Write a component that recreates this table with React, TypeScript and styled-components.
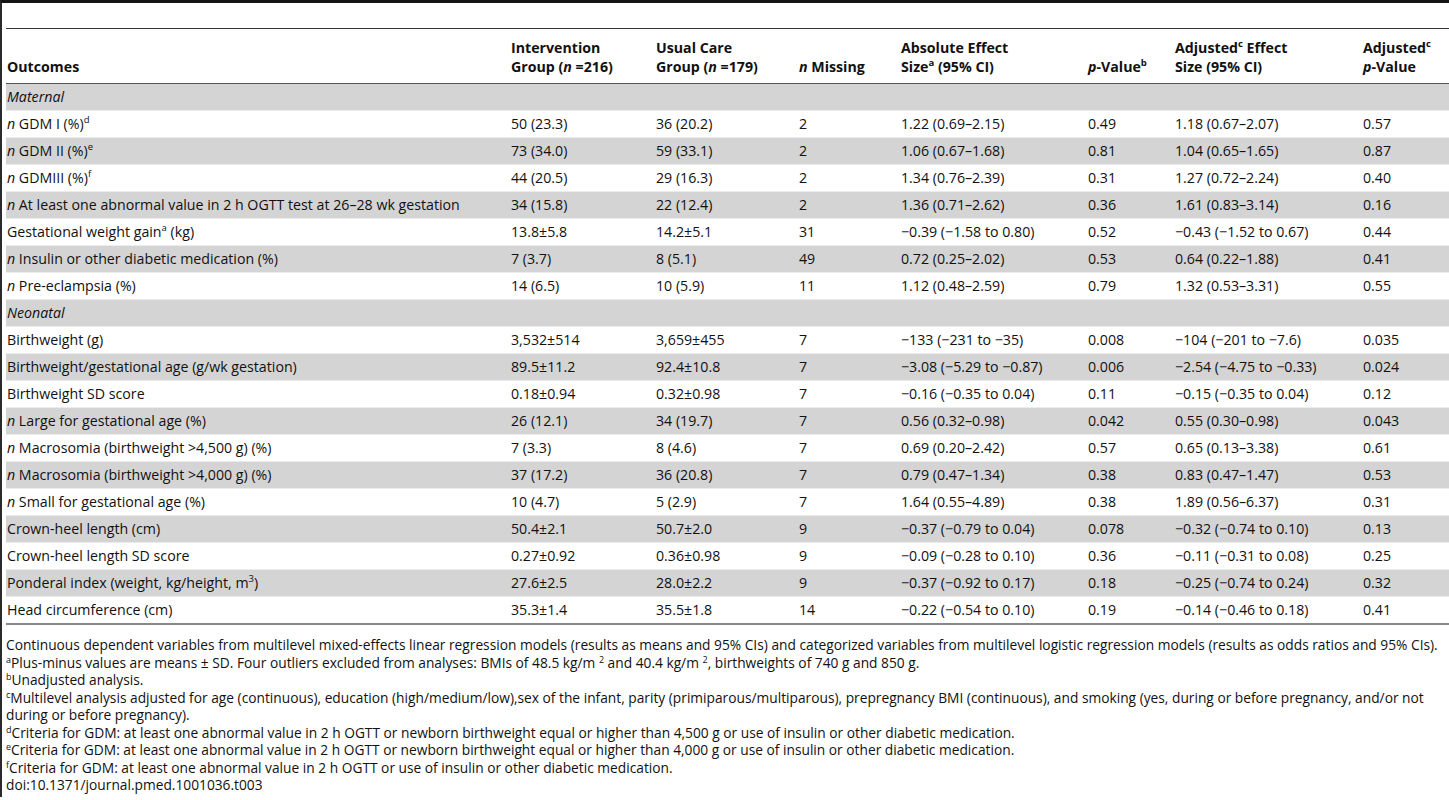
import React from 'react'
import styled, { createGlobalStyle } from 'styled-components'

const Global = createGlobalStyle`
  body {
    margin: 0;
    background: #fff;
    font-family: 'Open Sans', 'Noto Sans', sans-serif;
    color: #111;
  }
`

const Frame = styled.div`
  border-left: 2px solid #2a2a2a;
  border-top: 3px solid #151515;
  min-height: 797px;
  padding-left: 4px;
  box-sizing: border-box;
`

const Caption = styled.div`
  height: 25px;
`

const Table = styled.table`
  width: 100%;
  border-collapse: collapse;
  table-layout: fixed;
  border-top: 1px solid #333;
  border-bottom: 2px solid #888;
  font-size: 14.2px;
`

const Th = styled.th`
  text-align: left;
  vertical-align: bottom;
  font-weight: 700;
  line-height: 19px;
  padding: 9px 0 7px 1px;
  border-bottom: 1px solid #555;
  white-space: nowrap;
`

const Row = styled.tr<{ $shade?: boolean }>`
  background: ${({ $shade }) => ($shade ? '#d4d4d4' : '#fff')};
  border-top: 1px solid #ececec;
`

const Td = styled.td`
  line-height: 26px;
  padding: 0 0 0 1px;
  white-space: nowrap;
  vertical-align: middle;
`

const Section = styled.td`
  line-height: 26px;
  padding: 0 0 0 1px;
  font-style: italic;
`

const Sup = styled.sup`
  font-size: 9.5px;
  line-height: 0;
  vertical-align: 6px;
`

const I = styled.i`
  font-style: italic;
`

const Notes = styled.div`
  padding-top: 11px;
  padding-right: 1px;
  font-size: 13.75px;
  line-height: 17.5px;
`

const Note = styled.div``

const NoteSup = styled.sup`
  font-size: 9px;
  line-height: 0;
  vertical-align: 5px;
`

type Cell = React.ReactNode
type DataRow = { label: Cell; cells: Cell[] } | { section: string }

const n = <I>n</I>
const m = '\u2212'

const rows: DataRow[] = [
  { section: 'Maternal' },
  { label: <>{n} GDM I (%)<Sup>d</Sup></>, cells: ['50 (23.3)', '36 (20.2)', '2', '1.22 (0.69–2.15)', '0.49', '1.18 (0.67–2.07)', '0.57'] },
  { label: <>{n} GDM II (%)<Sup>e</Sup></>, cells: ['73 (34.0)', '59 (33.1)', '2', '1.06 (0.67–1.68)', '0.81', '1.04 (0.65–1.65)', '0.87'] },
  { label: <>{n} GDMIII (%)<Sup>f</Sup></>, cells: ['44 (20.5)', '29 (16.3)', '2', '1.34 (0.76–2.39)', '0.31', '1.27 (0.72–2.24)', '0.40'] },
  { label: <>{n} At least one abnormal value in 2 h OGTT test at 26–28 wk gestation</>, cells: ['34 (15.8)', '22 (12.4)', '2', '1.36 (0.71–2.62)', '0.36', '1.61 (0.83–3.14)', '0.16'] },
  { label: <>Gestational weight gain<Sup>a</Sup> (kg)</>, cells: ['13.8±5.8', '14.2±5.1', '31', `${m}0.39 (${m}1.58 to 0.80)`, '0.52', `${m}0.43 (${m}1.52 to 0.67)`, '0.44'] },
  { label: <>{n} Insulin or other diabetic medication (%)</>, cells: ['7 (3.7)', '8 (5.1)', '49', '0.72 (0.25–2.02)', '0.53', '0.64 (0.22–1.88)', '0.41'] },
  { label: <>{n} Pre-eclampsia (%)</>, cells: ['14 (6.5)', '10 (5.9)', '11', '1.12 (0.48–2.59)', '0.79', '1.32 (0.53–3.31)', '0.55'] },
  { section: 'Neonatal' },
  { label: 'Birthweight (g)', cells: ['3,532±514', '3,659±455', '7', `${m}133 (${m}231 to ${m}35)`, '0.008', `${m}104 (${m}201 to ${m}7.6)`, '0.035'] },
  { label: 'Birthweight/gestational age (g/wk gestation)', cells: ['89.5±11.2', '92.4±10.8', '7', `${m}3.08 (${m}5.29 to ${m}0.87)`, '0.006', `${m}2.54 (${m}4.75 to ${m}0.33)`, '0.024'] },
  { label: 'Birthweight SD score', cells: ['0.18±0.94', '0.32±0.98', '7', `${m}0.16 (${m}0.35 to 0.04)`, '0.11', `${m}0.15 (${m}0.35 to 0.04)`, '0.12'] },
  { label: <>{n} Large for gestational age (%)</>, cells: ['26 (12.1)', '34 (19.7)', '7', '0.56 (0.32–0.98)', '0.042', '0.55 (0.30–0.98)', '0.043'] },
  { label: <>{n} Macrosomia (birthweight &gt;4,500 g) (%)</>, cells: ['7 (3.3)', '8 (4.6)', '7', '0.69 (0.20–2.42)', '0.57', '0.65 (0.13–3.38)', '0.61'] },
  { label: <>{n} Macrosomia (birthweight &gt;4,000 g) (%)</>, cells: ['37 (17.2)', '36 (20.8)', '7', '0.79 (0.47–1.34)', '0.38', '0.83 (0.47–1.47)', '0.53'] },
  { label: <>{n} Small for gestational age (%)</>, cells: ['10 (4.7)', '5 (2.9)', '7', '1.64 (0.55–4.89)', '0.38', '1.89 (0.56–6.37)', '0.31'] },
  { label: 'Crown-heel length (cm)', cells: ['50.4±2.1', '50.7±2.0', '9', `${m}0.37 (${m}0.79 to 0.04)`, '0.078', `${m}0.32 (${m}0.74 to 0.10)`, '0.13'] },
  { label: 'Crown-heel length SD score', cells: ['0.27±0.92', '0.36±0.98', '9', `${m}0.09 (${m}0.28 to 0.10)`, '0.36', `${m}0.11 (${m}0.31 to 0.08)`, '0.25'] },
  { label: <>Ponderal index (weight, kg/height, m<Sup>3</Sup>)</>, cells: ['27.6±2.5', '28.0±2.2', '9', `${m}0.37 (${m}0.92 to 0.17)`, '0.18', `${m}0.25 (${m}0.74 to 0.24)`, '0.32'] },
  { label: 'Head circumference (cm)', cells: ['35.3±1.4', '35.5±1.8', '14', `${m}0.22 (${m}0.54 to 0.10)`, '0.19', `${m}0.14 (${m}0.46 to 0.18)`, '0.41'] },
]

const widths = [504, 145, 143, 102, 187, 87, 188, 87]

const App: React.FC = () => {
  return (
    <Frame>
      <Global />
      <Caption />
      <Table>
        <colgroup>
          {widths.map((w, i) => <col key={i} style={{ width: w }} />)}
        </colgroup>
        <thead>
          <tr>
            <Th>Outcomes</Th>
            <Th>Intervention<br />Group (<I>n</I> =216)</Th>
            <Th>Usual Care<br />Group (<I>n</I> =179)</Th>
            <Th><I>n</I> Missing</Th>
            <Th>Absolute Effect<br />Size<Sup>a</Sup> (95% CI)</Th>
            <Th><I>p</I>-Value<Sup>b</Sup></Th>
            <Th>Adjusted<Sup>c</Sup> Effect<br />Size (95% CI)</Th>
            <Th>Adjusted<Sup>c</Sup><br /><I>p</I>-Value</Th>
          </tr>
        </thead>
        <tbody>
          {rows.map((r, i) => (
            <Row key={i} $shade={i % 2 === 0}>
              {'section' in r ? (
                <Section colSpan={8}>{r.section}</Section>
              ) : (
                <>
                  <Td>{r.label}</Td>
                  {r.cells.map((c, j) => <Td key={j}>{c}</Td>)}
                </>
              )}
            </Row>
          ))}
        </tbody>
      </Table>
      <Notes>
        <Note>Continuous dependent variables from multilevel mixed-effects linear regression models (results as means and 95% CIs) and categorized variables from multilevel logistic regression models (results as odds ratios and 95% CIs).</Note>
        <Note><NoteSup>a</NoteSup>Plus-minus values are means ± SD. Four outliers excluded from analyses: BMIs of 48.5 kg/m <NoteSup>2</NoteSup> and 40.4 kg/m <NoteSup>2</NoteSup>, birthweights of 740 g and 850 g.</Note>
        <Note><NoteSup>b</NoteSup>Unadjusted analysis.</Note>
        <Note><NoteSup>c</NoteSup>Multilevel analysis adjusted for age (continuous), education (high/medium/low),sex of the infant, parity (primiparous/multiparous), prepregnancy BMI (continuous), and smoking (yes, during or before pregnancy, and/or not during or before pregnancy).</Note>
        <Note><NoteSup>d</NoteSup>Criteria for GDM: at least one abnormal value in 2 h OGTT or newborn birthweight equal or higher than 4,500 g or use of insulin or other diabetic medication.</Note>
        <Note><NoteSup>e</NoteSup>Criteria for GDM: at least one abnormal value in 2 h OGTT or newborn birthweight equal or higher than 4,000 g or use of insulin or other diabetic medication.</Note>
        <Note><NoteSup>f</NoteSup>Criteria for GDM: at least one abnormal value in 2 h OGTT or use of insulin or other diabetic medication.</Note>
        <Note>doi:10.1371/journal.pmed.1001036.t003</Note>
      </Notes>
    </Frame>
  )
}

export default App
